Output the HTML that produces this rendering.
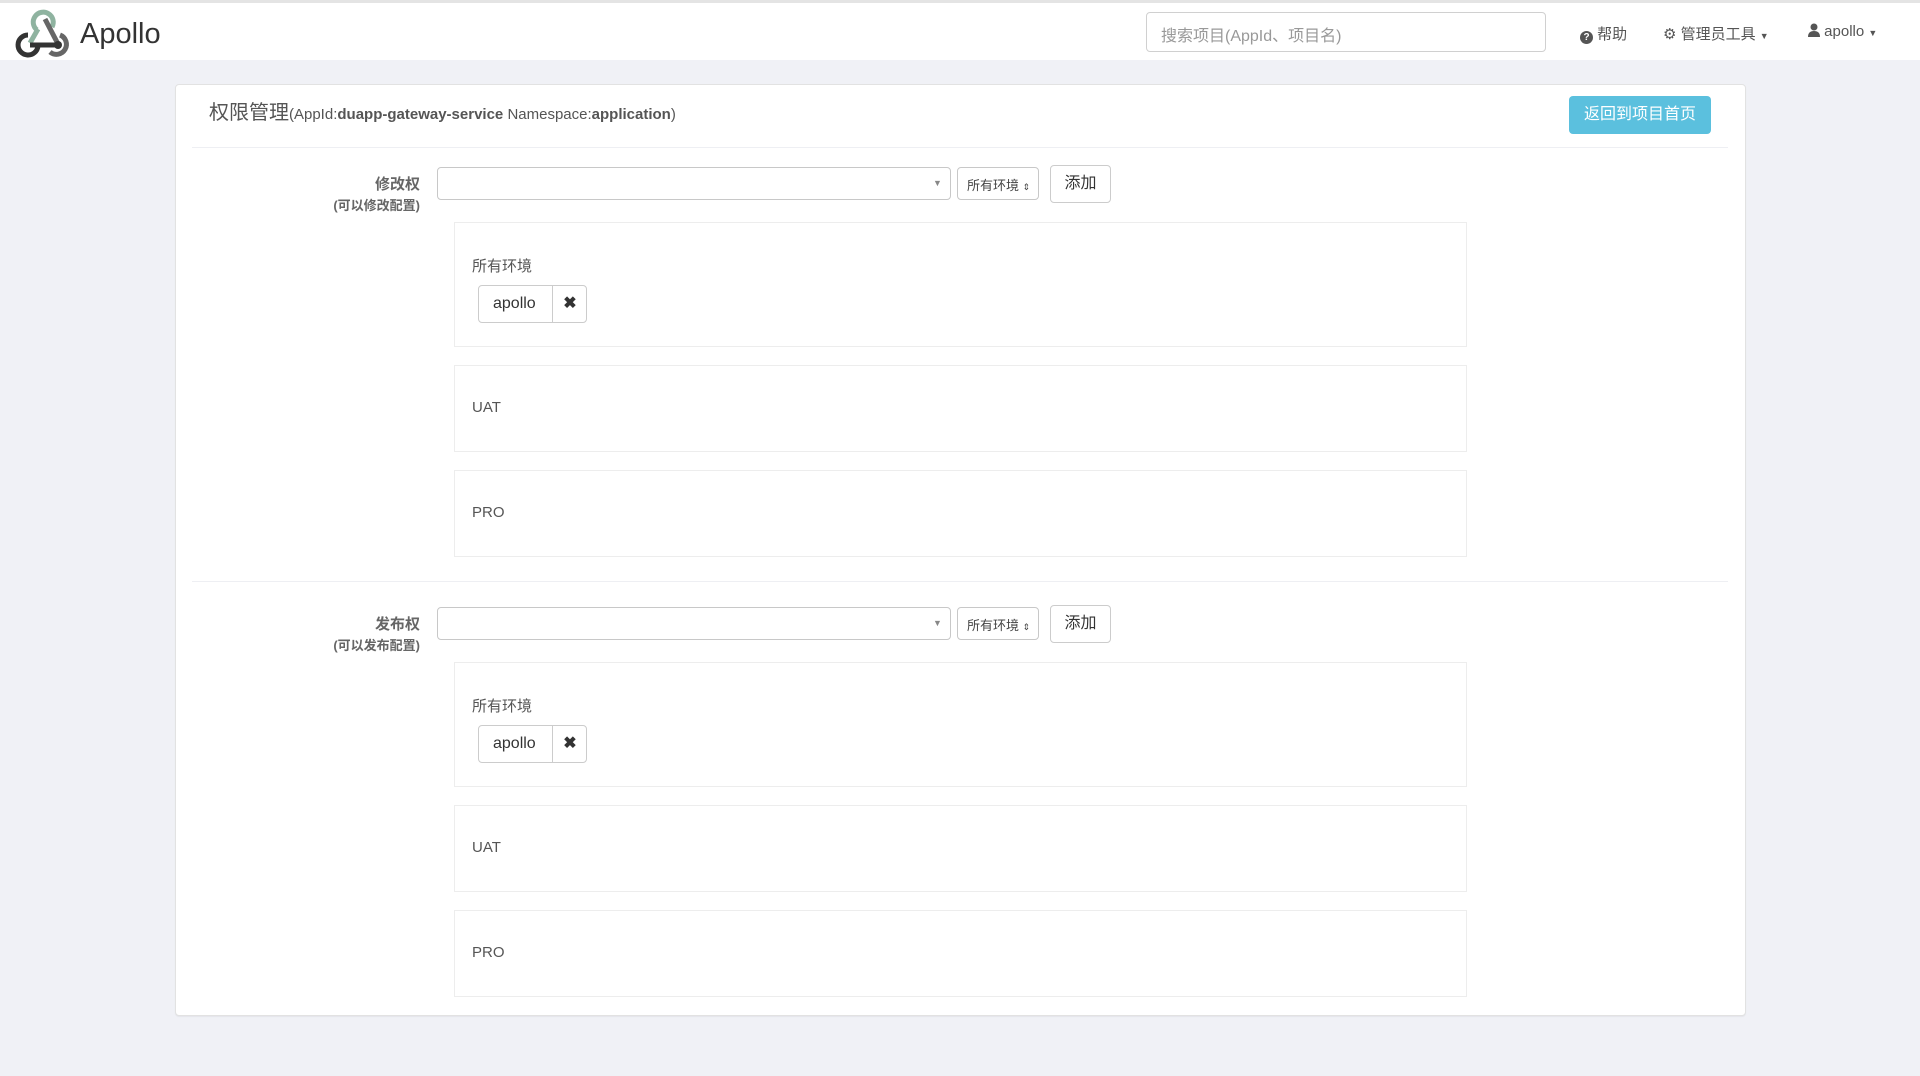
<!DOCTYPE html>
<html><head><meta charset="utf-8">
<style>
*{box-sizing:border-box;margin:0;padding:0;white-space:nowrap}
body{width:1920px;height:1076px;background:#f0f1f6;font-family:"Liberation Sans","Noto Sans CJK SC",sans-serif;color:#333;position:relative;overflow:hidden}
.abs{position:absolute}
.nav{left:0;top:0;width:1920px;height:60px;background:#fff;border-top:3px solid #e4e4e4}
.panel{left:175px;top:84px;width:1571px;height:932px;background:#fff;border:1px solid #e2e2e2;border-radius:4px;box-shadow:0 1px 1px rgba(0,0,0,.05)}
.hr{height:1px;background:#eeeff3}
.sel{border:1px solid #c8c8c8;border-radius:4px;background:#fff}
.box{border:1px solid #ededed;background:#fff}
.lbl{font-size:15px;color:#666;width:300px;text-align:right;font-weight:bold}
.envt{font-size:15px;color:#555}
.tag{border:1px solid #ccc;border-radius:4px;background:#fff;font-size:16px;color:#333}
.btn{border:1px solid #ccc;border-radius:4px;background:#fff;font-size:16px;text-align:center}
.nt{font-size:15px;color:#555;top:23px}
</style></head><body>
<div class="abs nav"></div>
<svg class="abs" style="left:14px;top:4px" width="62" height="56" viewBox="14 4 62 56">
<path d="M37 30 A10 10 0 1 1 52 27" fill="none" stroke="#8fb3a0" stroke-width="5"/>
<path d="M38 29 L30 43" stroke="#8fb3a0" stroke-width="5"/>
<path d="M45 19 L58 44" stroke="#666" stroke-width="5"/>
<path d="M28 35 A10 10 0 1 0 38 46" fill="none" stroke="#333" stroke-width="5"/>
<path d="M30 45 L58 45" stroke="#333" stroke-width="5"/>
<circle cx="58" cy="45" r="4" fill="#333"/>
<path d="M60 35 A10 10 0 1 1 50 52" fill="none" stroke="#666" stroke-width="5"/>
</svg>
<div class="abs" style="left:80px;top:18px;font-size:29px;color:#333">Apollo</div>
<div class="abs sel" style="left:1146px;top:12px;width:400px;height:40px;border-color:#d0d0d0"></div>
<div class="abs" style="left:1161px;top:22px;font-size:16px;color:#999">搜索项目(AppId、项目名)</div>
<div class="abs nt" style="left:1580px"><span style="display:inline-block;width:13px;height:13px;border-radius:50%;background:#555;color:#fff;font-size:10px;text-align:center;line-height:13px;font-weight:bold;vertical-align:-1px">?</span> 帮助</div>
<div class="abs nt" style="left:1663px">⚙ 管理员工具 <span style="font-size:9px">▼</span></div>
<div class="abs nt" style="left:1808px"><svg width="12" height="14" style="vertical-align:-1px"><circle cx="6" cy="4" r="3.5" fill="#555"/><path d="M0 14 Q0 8 6 8 Q12 8 12 14Z" fill="#555"/></svg> apollo <span style="font-size:9px">▼</span></div>

<div class="abs panel"></div>
<div class="abs" style="left:209px;top:96px;font-size:20px;color:#555">权限管理<span style="font-size:15px;color:#555">(AppId:<b>duapp-gateway-service</b> Namespace:<b>application</b>)</span></div>
<div class="abs" style="left:1569px;top:96px;width:142px;height:38px;background:#5bc0de;border-radius:4px;color:#fff;font-size:16px;text-align:center;line-height:38px">返回到项目首页</div>
<div class="abs hr" style="left:192px;top:147px;width:1536px"></div>
<div class="abs hr" style="left:192px;top:581px;width:1536px"></div>

<!-- section 1 -->
<div class="abs" style="left:0;top:0;width:1920px">
<div class="abs lbl" style="left:120px;top:173px">修改权</div>
<div class="abs lbl" style="left:120px;top:195px;font-size:13px">(可以修改配置)</div>
<div class="abs sel" style="left:437px;top:167px;width:514px;height:33px"></div>
<div class="abs" style="left:933px;top:178px;font-size:9px;color:#888">▼</div>
<div class="abs sel" style="left:957px;top:167px;width:82px;height:33px;font-size:13px;color:#444;padding:7px 0 0 9px">所有环境 <span style="font-size:9px">⇕</span></div>
<div class="abs btn" style="left:1050px;top:165px;width:61px;height:38px;line-height:36px">添加</div>
<div class="abs box" style="left:454px;top:222px;width:1013px;height:125px"></div>
<div class="abs envt" style="left:472px;top:255px">所有环境</div>
<div class="abs tag" style="left:478px;top:285px;width:109px;height:38px"><span class="abs" style="left:14px;top:9px">apollo</span><span class="abs" style="left:73px;top:-1px;height:38px;border-left:1px solid #ccc;width:35px;text-align:center;line-height:38px;font-weight:bold">✖</span></div>
<div class="abs box" style="left:454px;top:365px;width:1013px;height:87px"></div>
<div class="abs envt" style="left:472px;top:399px">UAT</div>
<div class="abs box" style="left:454px;top:470px;width:1013px;height:87px"></div>
<div class="abs envt" style="left:472px;top:504px">PRO</div>
</div>

<!-- section 2 -->
<div class="abs" style="left:0;top:440px;width:1920px">
<div class="abs lbl" style="left:120px;top:173px">发布权</div>
<div class="abs lbl" style="left:120px;top:195px;font-size:13px">(可以发布配置)</div>
<div class="abs sel" style="left:437px;top:167px;width:514px;height:33px"></div>
<div class="abs" style="left:933px;top:178px;font-size:9px;color:#888">▼</div>
<div class="abs sel" style="left:957px;top:167px;width:82px;height:33px;font-size:13px;color:#444;padding:7px 0 0 9px">所有环境 <span style="font-size:9px">⇕</span></div>
<div class="abs btn" style="left:1050px;top:165px;width:61px;height:38px;line-height:36px">添加</div>
<div class="abs box" style="left:454px;top:222px;width:1013px;height:125px"></div>
<div class="abs envt" style="left:472px;top:255px">所有环境</div>
<div class="abs tag" style="left:478px;top:285px;width:109px;height:38px"><span class="abs" style="left:14px;top:9px">apollo</span><span class="abs" style="left:73px;top:-1px;height:38px;border-left:1px solid #ccc;width:35px;text-align:center;line-height:38px;font-weight:bold">✖</span></div>
<div class="abs box" style="left:454px;top:365px;width:1013px;height:87px"></div>
<div class="abs envt" style="left:472px;top:399px">UAT</div>
<div class="abs box" style="left:454px;top:470px;width:1013px;height:87px"></div>
<div class="abs envt" style="left:472px;top:504px">PRO</div>
</div>
</body></html>
